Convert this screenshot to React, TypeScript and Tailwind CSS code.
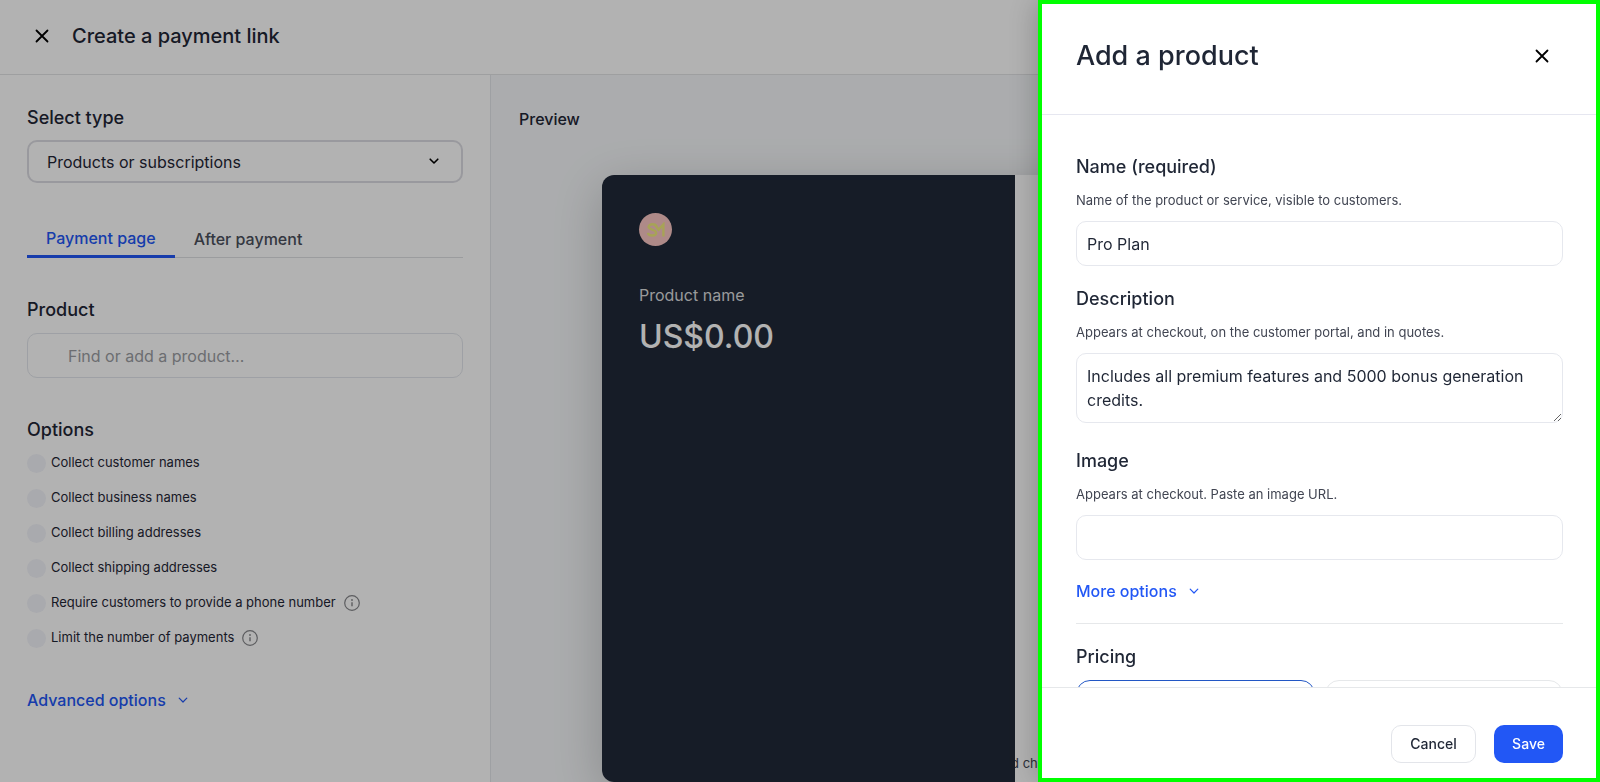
import React, { useState } from 'react';

const options = [
  { id: 'names', label: 'Collect customer names' },
  { id: 'business', label: 'Collect business names' },
  { id: 'billing', label: 'Collect billing addresses' },
  { id: 'shipping', label: 'Collect shipping addresses' },
  { id: 'phone', label: 'Require customers to provide a phone number', info: true },
  { id: 'limit', label: 'Limit the number of payments', info: true },
];

const CloseIcon: React.FC = () => (
  <svg width="14" height="14" viewBox="0 0 14 14" fill="none" stroke="black" strokeWidth="1.8" strokeLinecap="round">
    <path d="M1.5 1.5 12.5 12.5M12.5 1.5 1.5 12.5" />
  </svg>
);

const ChevronDown: React.FC<{ className?: string; strokeWidth?: number }> = ({ className, strokeWidth = 1.2 }) => (
  <svg
    width="10"
    height="10"
    viewBox="0 0 10 10"
    fill="none"
    stroke="currentColor"
    strokeWidth={strokeWidth}
    strokeLinecap="round"
    strokeLinejoin="round"
    className={className}
  >
    <path d="M1.2 3.2 5 7 8.8 3.2" />
  </svg>
);

const InfoIcon: React.FC = () => (
  <svg width="16" height="16" viewBox="0 0 16 16" fill="none" stroke="#85868a" className="shrink-0">
    <circle cx="8" cy="8" r="7.3" strokeWidth="1.2" />
    <path d="M8 7.2v4" strokeWidth="1.4" />
    <circle cx="8" cy="5" r="0.9" fill="#85868a" stroke="none" />
  </svg>
);

interface FieldProps {
  id: string;
  label: string;
  help: string;
  children: React.ReactNode;
}

const Field: React.FC<FieldProps> = ({ id, label, help, children }) => (
  <div className="flex flex-col">
    <label htmlFor={id} className="text-lg leading-6 font-medium">
      {label}
    </label>
    <p className="mt-[11px] mb-[11px] text-[13px] leading-5 text-[#414552]">{help}</p>
    {children}
  </div>
);

const Sidebar: React.FC = () => (
  <section className="w-[491px] shrink-0 border-r border-[#e3e6ea] bg-white px-[27px] pt-[31px]">
    <label htmlFor="type" className="block text-lg leading-6 font-medium">
      Select type
    </label>
    <div className="relative mt-[10px]">
      <select
        id="type"
        className="h-[43px] w-full appearance-none rounded-[10px] border-2 border-[#dcdce2] bg-white px-[18px] text-base"
      >
        <option>Products or subscriptions</option>
      </select>
      <ChevronDown className="pointer-events-none absolute top-4 right-6 text-black" strokeWidth={1.6} />
    </div>

    <div className="mt-[34px] flex border-b border-[#dfe0e3] text-base font-medium">
      <button className="-mb-px h-[41px] border-b-3 border-[#2257f5] px-[19px] pt-1 text-[#2257f5]">Payment page</button>
      <button className="h-10 px-[19px] pt-1 text-[#4b505c]">After payment</button>
    </div>

    <label htmlFor="product" className="mt-10 block text-lg leading-6 font-medium">
      Product
    </label>
    <input
      id="product"
      placeholder="Find or add a product…"
      className="mt-[11px] h-[45px] w-full rounded-[10px] border border-[#e3e6ec] pl-10 text-base placeholder:text-[#9b9da3]"
    />

    <h2 className="mt-10 text-lg leading-6 font-medium">Options</h2>
    <ul className="mt-[11px] flex flex-col gap-[15px]">
      {options.map((option) => (
        <li key={option.id} className="flex h-5 items-center text-[13px]">
          <input
            type="checkbox"
            id={option.id}
            className="mr-[5px] size-[19px] appearance-none rounded-full bg-[#f3f4fa]"
          />
          <label htmlFor={option.id} className="mr-2">
            {option.label}
          </label>
          {option.info && <InfoIcon />}
        </li>
      ))}
    </ul>

    <button className="mt-10 flex items-center gap-3 text-base font-medium text-[#2257f5]">
      Advanced options
      <ChevronDown />
    </button>
  </section>
);

const Preview: React.FC = () => (
  <section className="min-w-0 flex-1 overflow-hidden bg-[#f5f7f9] pt-8 pl-7">
    <h2 className="text-base font-medium">Preview</h2>
    <div className="mt-11 ml-[83px] flex h-[607px] w-[826px] overflow-hidden rounded-xl bg-white shadow-[0_12px_50px_rgba(0,0,0,0.2)]">
      <div className="z-10 w-1/2 bg-[#202938] px-[37px] pt-[38px]">
        <div className="flex size-[33px] items-center justify-center rounded-full bg-[#f9c6c3]">
          <svg width="20" height="16" viewBox="0 0 20 16" fill="none" stroke="#f0ea7c" strokeWidth="2.4">
            <path d="M10.4 4.6C9.8 1.6 2.6 1.4 2.6 4.8 2.6 8 10.2 7.2 10.2 10.9 10.2 14.4 2.4 14.2 2 10.8" />
            <path d="M8.6 2.6 12.6 7.6 17.4 2.4V14.6" />
          </svg>
        </div>
        <p className="mt-[37px] text-base text-[#dcdddf]">Product name</p>
        <p className="mt-[10px] text-[32px] leading-10 font-medium text-white">US$0.00</p>
      </div>
      <div className="flex flex-1 items-end pb-[7px]">
        <p className="-ml-[72px] text-[13px] leading-6 whitespace-nowrap text-[#414552]">Confirm and change details</p>
      </div>
    </div>
  </section>
);

const ProductDrawer: React.FC = () => {
  const [name, setName] = useState('Pro Plan');
  const [description, setDescription] = useState('Includes all premium features and 5000 bonus generation credits.');
  const [image, setImage] = useState('');

  return (
    <div
      role="dialog"
      aria-labelledby="drawer-title"
      className="fixed inset-y-0 right-0 flex w-[562px] max-w-full flex-col border-4 border-[#00ff00] bg-white shadow-[0_0_30px_rgba(0,0,0,0.25)]"
    >
      <header className="flex h-[111px] shrink-0 items-start justify-between border-b border-[#e6e7f0] pt-8 pr-[47px] pl-[34px]">
        <h1 id="drawer-title" className="text-[27px] leading-10 font-medium">
          Add a product
        </h1>
        <button aria-label="Close" className="flex h-10 items-center">
          <CloseIcon />
        </button>
      </header>

      <div className="min-h-0 flex-1 overflow-hidden pt-10 pr-[33px] pl-[34px]">
        <Field id="name" label="Name (required)" help="Name of the product or service, visible to customers.">
          <input
            id="name"
            value={name}
            onChange={(e) => setName(e.target.value)}
            className="h-[45px] rounded-[10px] border border-[#e6e8ee] px-[10px] text-base"
          />
        </Field>
        <div className="h-[21px]" />
        <Field id="description" label="Description" help="Appears at checkout, on the customer portal, and in quotes.">
          <textarea
            id="description"
            rows={2}
            value={description}
            onChange={(e) => setDescription(e.target.value)}
            className="rounded-[10px] border border-[#e6e8ee] px-[10px] py-[10px] text-base"
          />
        </Field>
        <div className="h-[26px]" />
        <Field id="image" label="Image" help="Appears at checkout. Paste an image URL.">
          <input
            id="image"
            value={image}
            onChange={(e) => setImage(e.target.value)}
            className="h-[45px] rounded-[10px] border border-[#e6e8ee] px-[10px] text-base"
          />
        </Field>

        <button className="mt-[19px] flex items-center gap-3 text-base font-medium text-[#2257f5]">
          More options
          <ChevronDown />
        </button>
        <hr className="mt-5 border-[#e6e8ea]" />
        <h2 className="mt-[21px] text-lg leading-6 font-medium">Pricing</h2>
        <div className="mt-[11px] grid grid-cols-2 gap-[10px]">
          <button aria-label="Recurring" className="h-20 rounded-[14px] border border-[#2257c5]" />
          <button aria-label="One-off" className="h-20 rounded-[14px] border border-[#e6e8ea]" />
        </div>
      </div>

      <footer className="flex h-[91px] shrink-0 justify-end gap-[18px] border-t border-[#e6e8ea] pt-[37px] pr-[33px] text-sm font-medium">
        <button className="h-[38px] w-[85px] rounded-[10px] border border-[#e3e5ea]">Cancel</button>
        <button className="h-[38px] w-[69px] rounded-[10px] bg-[#2257f5] text-white">Save</button>
      </footer>
    </div>
  );
};

const App: React.FC = () => {
  return (
    <div className="flex h-screen flex-col overflow-hidden bg-white font-['Inter',sans-serif] text-[#1f2635]">
      <header className="flex h-[75px] shrink-0 items-center gap-[23px] border-b border-[#e3e4e6] pb-[2px] pl-[35px]">
        <button aria-label="Close">
          <CloseIcon />
        </button>
        <h1 className="text-xl font-medium">Create a payment link</h1>
      </header>
      <main className="flex min-h-0 flex-1">
        <Sidebar />
        <Preview />
      </main>
      <div className="fixed inset-0 z-10 bg-black/30" />
      <div className="relative z-20">
        <ProductDrawer />
      </div>
    </div>
  );
};

export default App;
